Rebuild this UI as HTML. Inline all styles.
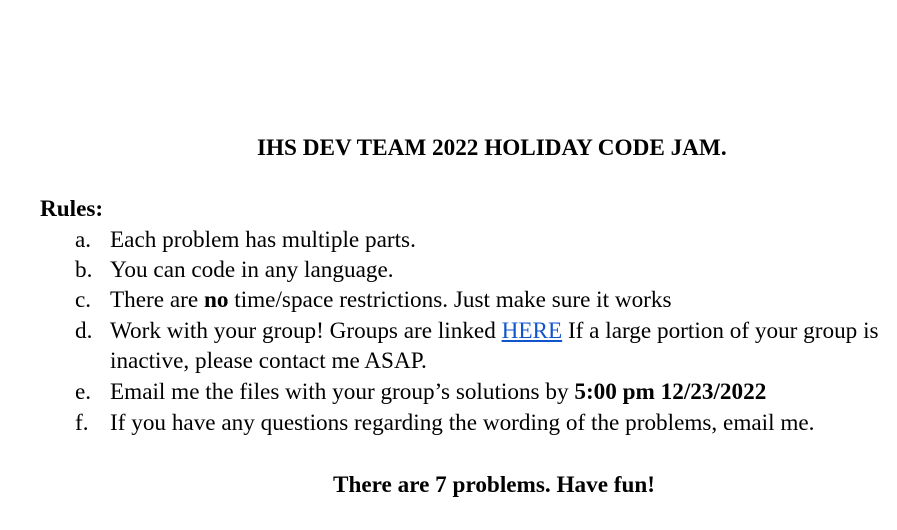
<!DOCTYPE html>
<html><head><meta charset="utf-8"><style>
body{margin:0;width:897px;height:530px;background:#fff;font-family:"Liberation Serif",serif;font-size:23.2px;color:#000;position:relative;overflow:hidden}
.l{position:absolute;line-height:26px;white-space:nowrap}
.m{position:absolute;left:75px;line-height:26px}
a{color:#1155cc;text-decoration:underline}
</style></head><body>
<div class="l" style="left:257px;top:135px;font-weight:bold">IHS DEV TEAM 2022 HOLIDAY CODE JAM.</div>
<div class="l" style="left:40px;top:196px;font-weight:bold">Rules:</div>
<div class="m" style="top:227px">a.</div><div class="l" style="left:110px;top:227px">Each problem has multiple parts.</div>
<div class="m" style="top:257px">b.</div><div class="l" style="left:110px;top:257px">You can code in any language.</div>
<div class="m" style="top:287px">c.</div><div class="l" style="left:110px;top:287px">There are <b>no</b> time/space restrictions. Just make sure it works</div>
<div class="m" style="top:318px">d.</div><div class="l" style="left:110px;top:318px">Work with your group! Groups are linked <a>HERE</a> If a large portion of your group is</div>
<div class="l" style="left:110px;top:348px">inactive, please contact me ASAP.</div>
<div class="m" style="top:379px">e.</div><div class="l" style="left:110px;top:379px">Email me the files with your group’s solutions by <b>5:00 pm 12/23/2022</b></div>
<div class="m" style="top:410px">f.</div><div class="l" style="left:110px;top:410px">If you have any questions regarding the wording of the problems, email me.</div>
<div class="l" style="left:333px;top:472px;font-weight:bold">There are 7 problems. Have fun!</div>
</body></html>
